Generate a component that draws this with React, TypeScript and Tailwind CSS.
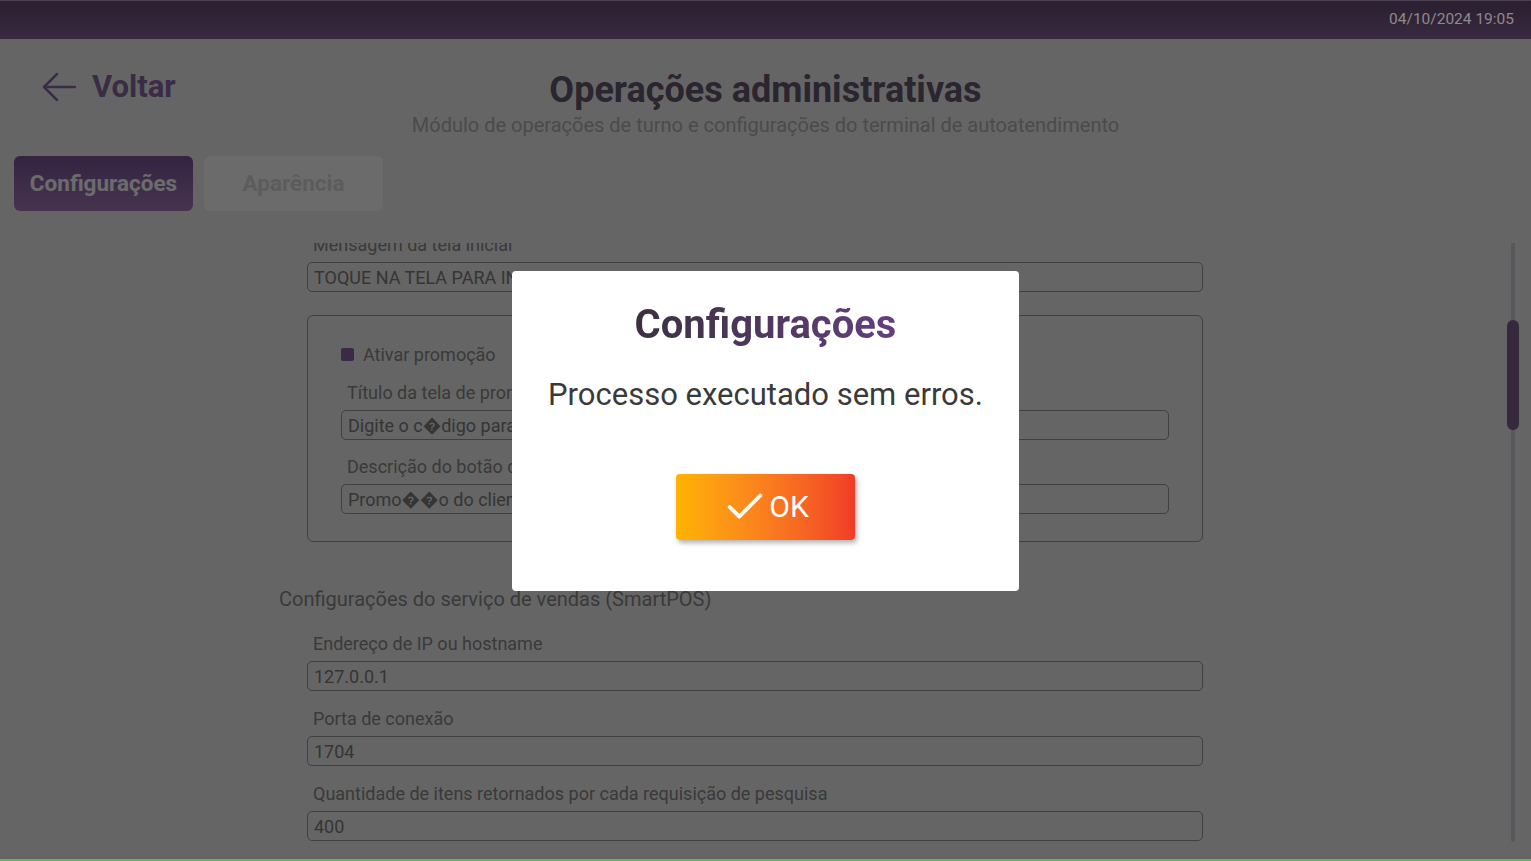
import React from 'react';
import { Check } from 'lucide-react';

function Field({ label, value, gap = 'mb-[18px]' }: { label: string; value: string; gap?: string }) {
  return (
    <div className={gap}>
      <p className="pl-[6px] text-[18px] leading-[20px] text-[#818181] whitespace-nowrap">{label}</p>
      <div className="mt-[7px] h-[30px] rounded-[5px] border border-[#8e8e8e] px-[6px] flex items-center text-[18px] text-[#767676] whitespace-nowrap overflow-hidden">
        {value}
      </div>
    </div>
  );
}

export default function App() {
  return (
    <div className="h-screen flex flex-col font-['Roboto','Liberation_Sans',sans-serif] overflow-hidden">
      {/* top bar */}
      <header className="relative z-20 h-[39px] shrink-0 bg-linear-to-b from-[#2a1e30] to-[#392a40] border-t border-[#4a4050] flex items-center justify-end pr-[17px]">
        <span className="text-[15.5px] text-[#8b8b8b]">04/10/2024 19:05</span>
      </header>

      <main className="flex-1 min-h-0 flex flex-col bg-[#e0e0e0]">
        {/* heading */}
        <div className="grid grid-cols-[1fr_auto_1fr] pt-[30px]">
          <div className="flex items-center gap-[16px] pl-[42px] h-[36px] self-start">
            <svg width="34" height="30" viewBox="0 0 34 30" fill="none" stroke="#816299" strokeWidth="2.5" strokeLinecap="round" strokeLinejoin="round">
              <path d="M33 15H2" />
              <path d="M15 2 2 15l13 13" />
            </svg>
            <span className="text-[31px] leading-[36px] font-bold text-[#816299]">Voltar</span>
          </div>
          <div className="flex flex-col items-center">
            <h1 className="text-[36px] leading-[42px] font-bold text-[#5e5268]">Operações administrativas</h1>
            <p className="mt-[2px] text-[20px] leading-[24px] text-[#a7a7a7]">
              Módulo de operações de turno e configurações do terminal de autoatendimento
            </p>
          </div>
          <div />
        </div>

        {/* tabs */}
        <div className="flex gap-[11px] pl-[14px] mt-[19px]">
          <button className="w-[179px] h-[55px] rounded-[6px] bg-linear-to-b from-[#745090] to-[#9c74b0] text-[22.5px] font-bold text-[#f0f0f0]">
            Configurações
          </button>
          <button className="w-[179px] h-[55px] rounded-[6px] bg-[#eeeeee] text-[22.5px] font-bold text-[#cccccc]">
            Aparência
          </button>
        </div>

        {/* scroll area */}
        <div className="relative flex-1 min-h-0 mt-[32px] overflow-hidden pr-[21px]">
          <div className="w-[952px] mx-auto -mt-[8px]">
            <div className="px-[28px]">
              <Field label="Mensagem da tela inicial" value="TOQUE NA TELA PARA INICIAR" gap="mb-[23px]" />

              <div className="rounded-[6px] border border-[#8e8e8e] pt-[26px] pb-[27px] px-[33px]">
                <div className="flex items-center gap-[9px] h-[24px]">
                  <span className="w-[13px] h-[13px] rounded-[2px] bg-[#835d99]" />
                  <span className="text-[18px] text-[#818181]">Ativar promoção</span>
                </div>
                <div className="mt-[17px]">
                  <Field label="Título da tela de promoção" value={'Digite o c\uFFFDdigo para participar'} gap="mb-[17px]" />
                  <Field label="Descrição do botão de promoção" value={'Promo\uFFFD\uFFFDo do cliente'} gap="" />
                </div>
              </div>
            </div>

            <h2 className="mt-[46px] text-[20px] leading-[22px] text-[#818181]">
              Configurações do serviço de vendas (SmartPOS)
            </h2>

            <div className="px-[28px] mt-[24px]">
              <Field label="Endereço de IP ou hostname" value="127.0.0.1" />
              <Field label="Porta de conexão" value="1704" />
              <Field label="Quantidade de itens retornados por cada requisição de pesquisa" value="400" />
            </div>
          </div>

          {/* scrollbar */}
          <div className="absolute right-[16px] -top-[1px] w-[4px] h-[600px] rounded-full bg-[#c6c1cc]">
            <div className="absolute -left-[4px] top-[78px] w-[12px] h-[110px] rounded-full bg-[#785987]" />
          </div>
        </div>
      </main>

      <div className="relative z-20 h-[2px] shrink-0 bg-[#5cb85c]" />

      {/* dialog */}
      <div className="fixed inset-0 z-10 bg-black/55 flex items-center justify-center">
        <div className="w-[507px] h-[320px] rounded-[4px] bg-white flex flex-col items-center pt-[30px]">
          <h3 className="text-[40px] leading-[48px] font-bold bg-linear-to-r from-[#3b3040] to-[#643f80] bg-clip-text text-transparent">
            Configurações
          </h3>
          <p className="mt-[28px] text-[31px] leading-[36px] text-[#3a3a3a]">Processo executado sem erros.</p>
          <button className="mt-[61px] w-[179px] h-[66px] rounded-[4px] bg-linear-to-r from-[#ffb300] to-[#f03b26] shadow-[2px_3px_5px_rgba(0,0,0,0.3)] flex items-center justify-center gap-[1px] text-white text-[30px]">
            <Check size={46} strokeWidth={2} />
            <span>OK</span>
          </button>
        </div>
      </div>
    </div>
  );
}
